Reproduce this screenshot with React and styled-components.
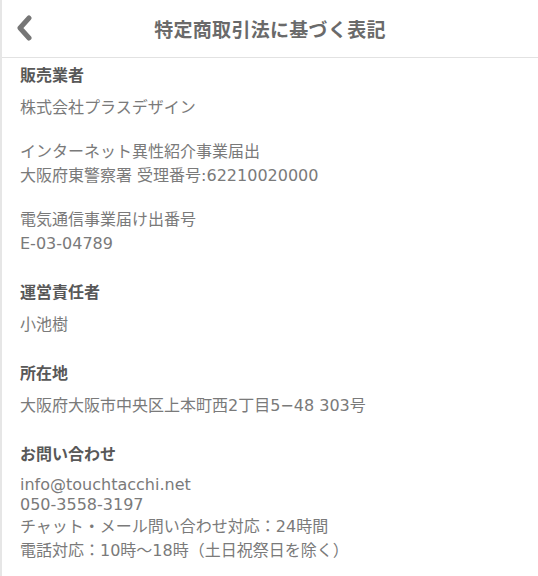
import React from "react";
import styled, { createGlobalStyle } from "styled-components";

const GlobalStyle = createGlobalStyle`
  html, body {
    margin: 0;
    padding: 0;
    background: #fff;
  }
  body {
    font-family: "DejaVu Sans", "Noto Sans CJK JP", sans-serif;
    -webkit-font-smoothing: antialiased;
  }
`;

const Page = styled.div`
  width: 538px;
  min-height: 576px;
  box-sizing: border-box;
  border-left: 2px solid #e6e6e6;
  background: #fff;
`;

const Header = styled.header`
  position: relative;
  height: 57px;
  display: flex;
  align-items: center;
  justify-content: center;
  border-bottom: 1px solid #e2e2e2;
`;

const BackButton = styled.button`
  position: absolute;
  left: 9px;
  top: 14px;
  width: 26px;
  height: 28px;
  padding: 0;
  border: none;
  background: none;
  display: flex;
  align-items: center;
  justify-content: center;
`;

const Title = styled.h1`
  margin: 0;
  font-family: "Noto Sans CJK JP", sans-serif;
  font-size: 19px;
  font-weight: 700;
  color: #6a6a6a;
  letter-spacing: 0.3px;
`;

const Content = styled.main`
  padding: 4px 20px 0 18px;
  display: flex;
  flex-direction: column;
  gap: 23px;
`;

const Section = styled.section`
  display: flex;
  flex-direction: column;
  gap: 20px;
`;

const Label = styled.h2`
  margin: 0 0 -10px;
  font-family: "Noto Sans CJK JP", sans-serif;
  font-size: 16px;
  line-height: 24px;
  font-weight: 700;
  color: #585858;
`;

const Text = styled.p`
  margin: 0;
  font-size: 16px;
  line-height: ${(p) => (p.$tight ? "20px" : "24px")};
  color: #7a7a7a;
`;

const Chevron = () => (
  <svg width="18" height="26" viewBox="0 0 18 26">
    <path d="M14 3 L5 13 L14 23" fill="none" stroke="#767676" strokeWidth="5" strokeLinecap="round" strokeLinejoin="round" />
  </svg>
);

const App = () => (
  <Page>
    <GlobalStyle />
    <Header>
      <BackButton aria-label="戻る">
        <Chevron />
      </BackButton>
      <Title>特定商取引法に基づく表記</Title>
    </Header>
    <Content>
      <Section>
        <Label>販売業者</Label>
        <Text>株式会社プラスデザイン</Text>
        <Text>
          インターネット異性紹介事業届出
          <br />
          大阪府東警察署 受理番号:62210020000
        </Text>
        <Text>
          電気通信事業届け出番号
          <br />
          E-03-04789
        </Text>
      </Section>
      <Section>
        <Label>運営責任者</Label>
        <Text>小池樹</Text>
      </Section>
      <Section>
        <Label>所在地</Label>
        <Text>大阪府大阪市中央区上本町西2丁目5−48 303号</Text>
      </Section>
      <Section>
        <Label>お問い合わせ</Label>
        <div>
          <Text $tight>info@touchtacchi.net</Text>
          <Text $tight>050-3558-3197</Text>
          <Text>チャット・メール問い合わせ対応：24時間</Text>
          <Text>電話対応：10時〜18時（土日祝祭日を除く）</Text>
        </div>
      </Section>
    </Content>
  </Page>
);

export default App;
